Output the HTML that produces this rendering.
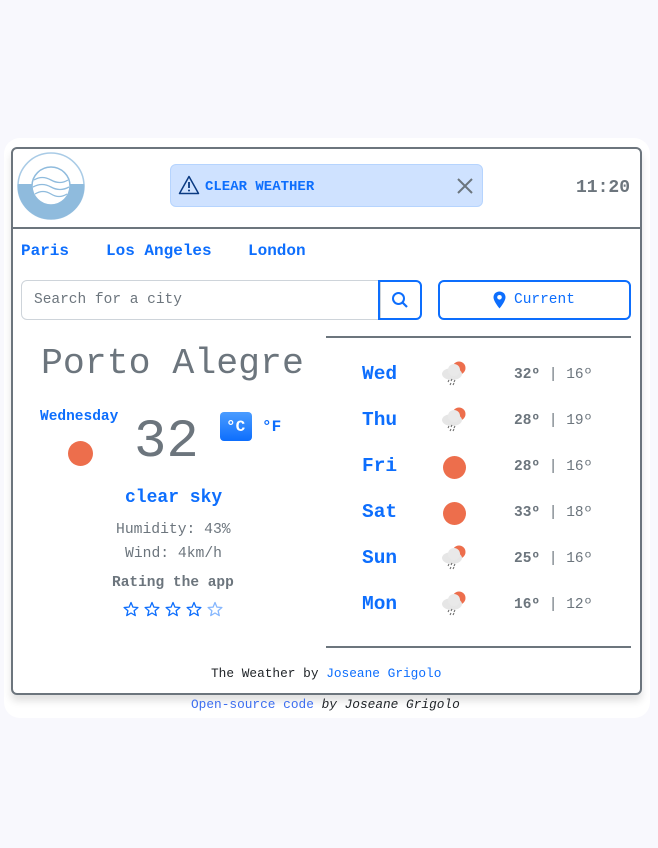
<!DOCTYPE html>
<html><head><meta charset="utf-8"><style>
*{box-sizing:border-box;margin:0;padding:0}
body{width:658px;height:848px;background:#f8f8fd;font-family:"Liberation Mono",monospace;position:relative;overflow:hidden}
.abs{position:absolute}
.card{left:4px;top:138px;width:646px;height:580px;background:#fff;border-radius:16px}
.box{left:11px;top:147px;width:631px;height:548px;border:2px solid #6c757d;border-radius:6px;box-shadow:0 6px 8px rgba(0,0,0,.12)}
.blue{color:#0d6efd}
.gray{color:#6c757d}
.t{white-space:nowrap;line-height:1}
</style></head><body>
<div class="abs card"></div>
<div class="abs box"></div>
<svg class="abs" style="left:17px;top:152px" width="68" height="68" viewBox="0 0 68 68">
<defs><clipPath id="b"><rect x="0" y="32" width="68" height="36"/></clipPath></defs>
<circle cx="34" cy="34" r="33" fill="#fff" stroke="#a9cbe6" stroke-width="1.5"/>
<circle cx="34" cy="34" r="33.5" fill="#8fbbdd" clip-path="url(#b)"/>
<circle cx="34" cy="34" r="19" fill="#fff" stroke="#8fbbdd" stroke-width="1.5"/>
<path d="M17 28 q8-5 17 0 t17 0 M16 35 q9-5 18 0 t18 0 M18 42 q8-5 16 0 t16 0" stroke="#8fbbdd" stroke-width="1.3" fill="none"/>
</svg>
<div class="abs" style="left:170px;top:164px;width:313px;height:43px;background:#cfe2ff;border:1px solid #b6d4fe;border-radius:6px"></div>
<svg class="abs" style="left:178px;top:175px" width="22" height="20" viewBox="0 0 22 20"><path d="M11 1.5 L20.5 18.5 H1.5 Z" fill="none" stroke="#0a3a82" stroke-width="1.5" stroke-linejoin="round"/><path d="M11 7v6" stroke="#0a3a82" stroke-width="1.8"/><circle cx="11" cy="15.5" r="1" fill="#0a3a82"/></svg>
<div class="abs t blue" style="left:205px;top:180px;font-size:14px;font-weight:bold">CLEAR WEATHER</div>
<svg class="abs" style="left:456px;top:177px" width="18" height="18"><path d="M2 2L16 16M16 2L2 16" stroke="#6c757d" stroke-width="2"/></svg>
<div class="abs t gray" style="left:576px;top:179px;font-size:18px;font-weight:bold">11:20</div>
<div class="abs" style="left:13px;top:227px;width:627px;height:2px;background:#6c757d"></div>
<div class="abs t blue" style="left:21px;top:243px;font-size:16px;font-weight:bold">Paris</div>
<div class="abs t blue" style="left:106px;top:243px;font-size:16px;font-weight:bold">Los Angeles</div>
<div class="abs t blue" style="left:248px;top:243px;font-size:16px;font-weight:bold">London</div>
<div class="abs" style="left:21px;top:280px;width:360px;height:40px;border:1px solid #ced4da;border-radius:6px 0 0 6px"></div>
<div class="abs t" style="left:34px;top:293px;font-size:14.5px;color:#6c757d">Search for a city</div>
<div class="abs" style="left:378px;top:280px;width:44px;height:40px;border:2px solid #0d6efd;border-radius:0 6px 6px 0"></div>
<svg class="abs" style="left:391px;top:291px" width="18" height="18"><circle cx="7.5" cy="7.5" r="5.5" fill="none" stroke="#0d6efd" stroke-width="2"/><path d="M11.5 11.5L16 16" stroke="#0d6efd" stroke-width="2.2"/></svg>
<div class="abs" style="left:438px;top:280px;width:193px;height:40px;border:2px solid #0d6efd;border-radius:6px"></div>
<svg class="abs" style="left:493px;top:291px" width="13" height="18" viewBox="0 0 13 18"><path d="M6.5 0.5C3 0.5 0.5 3 0.5 6.3 0.5 10.5 6.5 17.5 6.5 17.5S12.5 10.5 12.5 6.3C12.5 3 10 0.5 6.5 0.5Z" fill="#0d6efd"/><circle cx="6.5" cy="6.3" r="2.3" fill="#fff"/></svg>
<div class="abs t blue" style="left:514px;top:293px;font-size:14.5px">Current</div>
<div class="abs t gray" style="left:41px;top:346px;font-size:36.5px">Porto Alegre</div>
<div class="abs t blue" style="left:40px;top:410px;font-size:14.5px;font-weight:bold">Wednesday</div>
<div class="abs" style="left:68px;top:441px;width:25px;height:25px;border-radius:50%;background:#ed6e4c"></div>
<div class="abs t gray" style="left:134px;top:416px;font-size:54px">32</div>
<div class="abs" style="left:220px;top:412px;width:32px;height:29px;border-radius:4px;background:linear-gradient(#4a9cff,#0d6efd)"></div>
<div class="abs t" style="left:226px;top:419px;font-size:16px;font-weight:bold;color:#fff">°C</div>
<div class="abs t blue" style="left:262px;top:419px;font-size:16px;font-weight:bold">°F</div>
<div class="abs t blue" style="left:125px;top:489px;font-size:18px;font-weight:bold">clear sky</div>
<div class="abs t gray" style="left:116px;top:523px;font-size:14.7px">Humidity: 43%</div>
<div class="abs t gray" style="left:125px;top:547px;font-size:14.7px">Wind: 4km/h</div>
<div class="abs t gray" style="left:112px;top:576px;font-size:14.5px;font-weight:bold">Rating the app</div>
<svg class="abs" style="left:122px;top:601px" width="104" height="18" viewBox="0 0 104 18">
<defs><path id="s" d="M8 1.5l1.9 4.6 5 .4-3.8 3.2 1.2 4.9L8 12l-4.3 2.6 1.2-4.9L1.1 6.5l5-.4z" fill="none" stroke-width="1.3" stroke-linejoin="round"/></defs>
<use href="#s" x="1" stroke="#0d6efd"/><use href="#s" x="22" stroke="#0d6efd"/><use href="#s" x="43" stroke="#0d6efd"/><use href="#s" x="64" stroke="#0d6efd"/><use href="#s" x="85" stroke="#86b7fe"/>
</svg>
<div class="abs" style="left:326px;top:336px;width:305px;height:2px;background:#6c757d"></div>
<div class="abs" style="left:326px;top:646px;width:305px;height:2px;background:#6c757d"></div>
<div id="fc"></div>
<script>
var d=[["Wed",0,"32º","16º"],["Thu",0,"28º","19º"],["Fri",1,"28º","16º"],["Sat",1,"33º","18º"],["Sun",0,"25º","16º"],["Mon",0,"16º","12º"]],h="";
d.forEach(function(r,i){var y=365+i*46;
h+='<div class="abs t blue" style="left:362px;top:'+y+'px;font-size:19.5px;font-weight:bold">'+r[0]+'</div>';
if(r[1])h+='<div class="abs" style="left:443px;top:'+(y-1)+'px;width:23px;height:23px;border-radius:50%;background:#ed6e4c"></div>';
else h+='<svg class="abs" style="left:441px;top:'+(y-6)+'px" width="28" height="28"><circle cx="18" cy="9" r="6.5" fill="#ed6e4c"/><ellipse cx="11" cy="15" rx="10" ry="6" fill="#e6e6e6"/><circle cx="13" cy="11" r="6" fill="#e9e9e9"/><path d="M8 21l-1 2M11 20l-1 2M14 21l-1 2M10 24l-1 2M13 24l-1 2" stroke="#666" stroke-width="1"/></svg>';
h+='<div class="abs t gray" style="left:514px;top:'+(y+3)+'px;font-size:14.5px"><b>'+r[2]+'</b> | '+r[3]+'</div>';});
document.getElementById("fc").innerHTML=h;
</script>
<div class="abs t" style="left:211px;top:668px;font-size:12.8px;color:#212529">The Weather by <span class="blue">Joseane Grigolo</span></div>
<div class="abs t" style="left:191px;top:699px;font-size:12.8px;color:#212529"><span style="color:#3d6ef0">Open-source code</span> <i>by Joseane Grigolo</i></div>
</body></html>
